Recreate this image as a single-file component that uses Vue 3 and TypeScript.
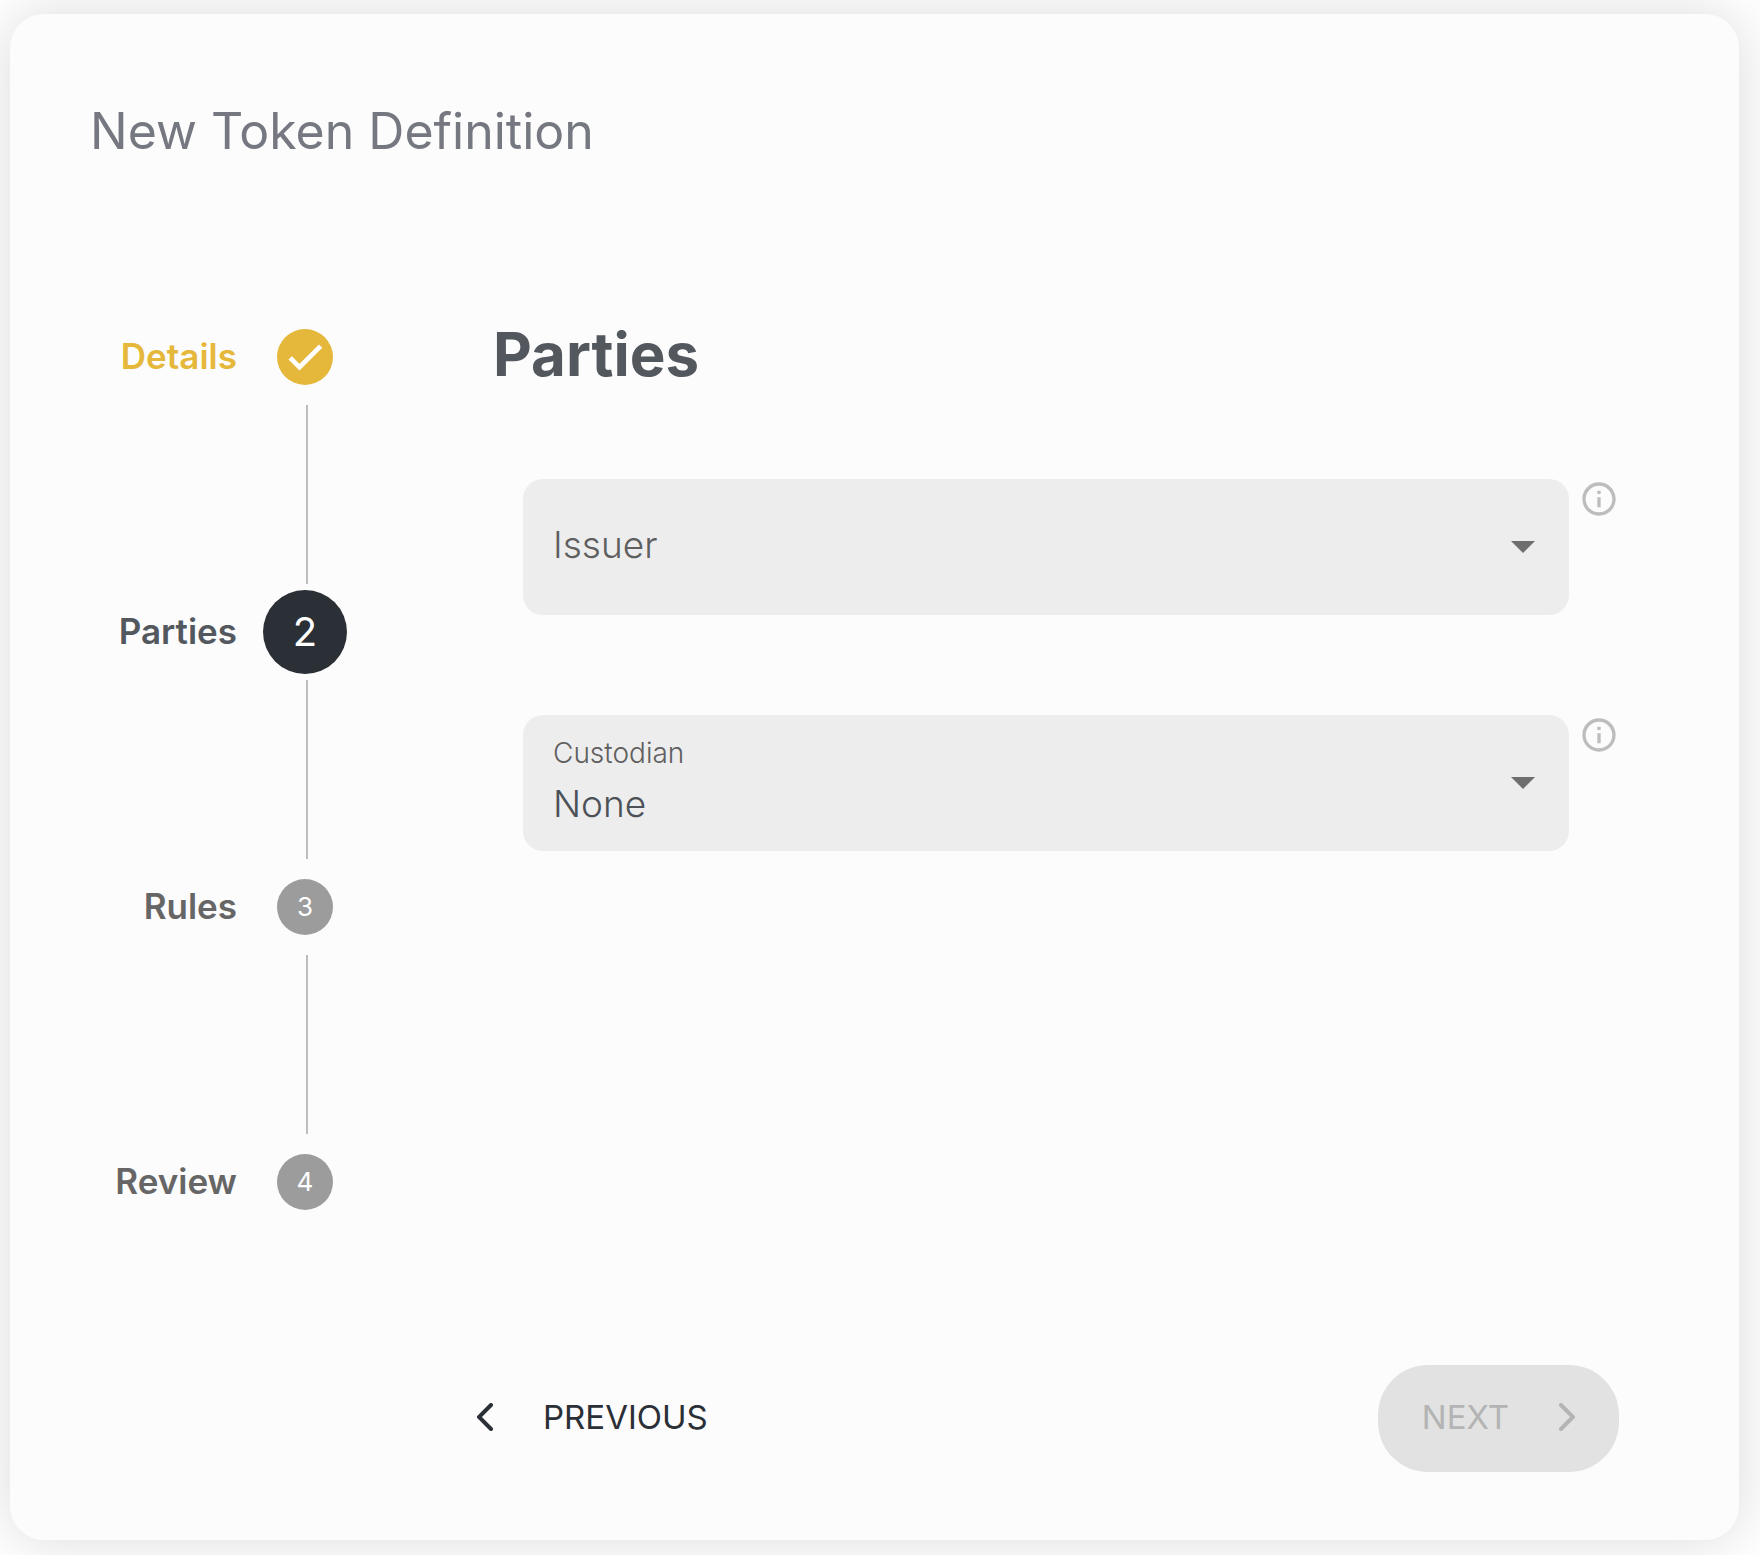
<script setup lang="ts">
import { ref } from 'vue'

type StepState = 'done' | 'active' | 'todo'

interface Step {
  label: string
  state: StepState
}

const steps: Step[] = [
  { label: 'Details', state: 'done' },
  { label: 'Parties', state: 'active' },
  { label: 'Rules', state: 'todo' },
  { label: 'Review', state: 'todo' },
]

const issuer = ref('')
const custodian = ref('none')
</script>

<template>
  <main class="page">
    <section class="card">
      <h1 class="title">New Token Definition</h1>

      <div class="body">
        <ol class="steps">
          <li v-for="(step, i) in steps" :key="step.label" class="step" :class="step.state">
            <div class="step-row">
              <span class="step-label">{{ step.label }}</span>
              <span class="marker-slot">
                <span class="marker">
                  <svg v-if="step.state === 'done'" class="check" viewBox="0 0 24 24" aria-hidden="true">
                    <path d="M9 16.17 4.83 12l-1.42 1.41L9 19 21 7l-1.41-1.41z" />
                  </svg>
                  <template v-else>{{ i + 1 }}</template>
                </span>
              </span>
            </div>
            <div v-if="i < steps.length - 1" class="connector"></div>
          </li>
        </ol>

        <form class="panel" @submit.prevent>
          <h2 class="heading">Parties</h2>

          <div class="field-row">
            <div class="field">
              <label for="issuer" class="field-label" :class="{ floating: issuer }">Issuer</label>
              <select id="issuer" v-model="issuer" class="select">
                <option value=""></option>
              </select>
              <svg class="caret" viewBox="0 0 24 12" aria-hidden="true"><path d="M0 0h24L12 12z" /></svg>
            </div>
            <button type="button" class="info" aria-label="About the issuer">
              <svg viewBox="0 0 24 24" aria-hidden="true">
                <path d="M11 7h2v2h-2zm0 4h2v6h-2zm1-9C6.48 2 2 6.48 2 12s4.48 10 10 10 10-4.48 10-10S17.52 2 12 2m0 18c-4.41 0-8-3.59-8-8s3.59-8 8-8 8 3.59 8 8-3.59 8-8 8" />
              </svg>
            </button>
          </div>

          <div class="field-row">
            <div class="field">
              <label for="custodian" class="field-label" :class="{ floating: custodian }">Custodian</label>
              <select id="custodian" v-model="custodian" class="select">
                <option value="none">None</option>
              </select>
              <svg class="caret" viewBox="0 0 24 12" aria-hidden="true"><path d="M0 0h24L12 12z" /></svg>
            </div>
            <button type="button" class="info" aria-label="About the custodian">
              <svg viewBox="0 0 24 24" aria-hidden="true">
                <path d="M11 7h2v2h-2zm0 4h2v6h-2zm1-9C6.48 2 2 6.48 2 12s4.48 10 10 10 10-4.48 10-10S17.52 2 12 2m0 18c-4.41 0-8-3.59-8-8s3.59-8 8-8 8 3.59 8 8-3.59 8-8 8" />
              </svg>
            </button>
          </div>
        </form>
      </div>

      <footer class="actions">
        <button type="button" class="action">
          <svg class="chevron" viewBox="0 0 16 28" aria-hidden="true"><path d="M14 2 2 14l12 12" /></svg>
          Previous
        </button>
        <button type="button" class="action next" disabled>
          Next
          <svg class="chevron" viewBox="0 0 16 28" aria-hidden="true"><path d="m2 2 12 12L2 26" /></svg>
        </button>
      </footer>
    </section>
  </main>
</template>

<style>
body {
  margin: 0;
  background: #fff;
}
</style>

<style scoped>
.page {
  box-sizing: border-box;
  min-height: 100vh;
  padding: 14px 21px 15px 10px;
  overflow: hidden;
  display: flex;
  font-family: Inter, "Liberation Sans", sans-serif;
}

.card {
  box-sizing: border-box;
  flex: 1;
  min-width: 0;
  display: flex;
  flex-direction: column;
  padding: 86px 120px 68px 80px;
  border-radius: 34px;
  background: #fcfcfc;
  box-shadow: 0 0 60px rgba(0, 0, 0, 0.15);
}

.title {
  margin: 0;
  font-size: 50px;
  line-height: 62px;
  font-weight: 400;
  color: #757880;
}

.body {
  flex: 1;
  display: flex;
  gap: 146px;
  padding-top: 147px;
}

.steps {
  list-style: none;
  margin: 0;
  padding: 0;
  width: 257px;
  flex-shrink: 0;
}

.step-row {
  display: flex;
  align-items: center;
  justify-content: flex-end;
  gap: 26px;
  height: 96px;
}

.step-label {
  padding-bottom: 1px;
  font-size: 35px;
  line-height: 43px;
  font-weight: 600;
  color: #666;
}

.marker-slot {
  display: flex;
  justify-content: center;
  width: 84px;
}

.marker {
  display: flex;
  align-items: center;
  justify-content: center;
  width: 56px;
  height: 56px;
  border-radius: 50%;
  background: #9c9c9c;
  color: #fff;
  font-size: 26px;
  line-height: 32px;
  font-weight: 400;
}

.connector {
  width: 2px;
  height: 179px;
  margin-left: 216px;
  background: #bdbdbd;
}

.done .step-label {
  color: #e5b83b;
}

.done .marker {
  background: #e5b83b;
}

.active .step-label {
  color: #53585f;
}

.active .marker {
  width: 84px;
  height: 84px;
  background: #2b2f36;
  font-size: 40px;
  line-height: 48px;
}

.check {
  width: 44px;
  height: 44px;
  fill: #fff;
  stroke: #fff;
  stroke-width: 0.6;
}

.panel {
  flex: 1;
  min-width: 0;
  display: flex;
  flex-direction: column;
}

.heading {
  margin: 9px 0 25px;
  font-size: 60px;
  line-height: 72px;
  font-weight: 700;
  color: #53585f;
}

.field-row {
  display: flex;
  align-items: flex-start;
  gap: 10px;
  margin: 64px 0 0 30px;
}

.field-row + .field-row {
  margin-top: 100px;
}

.field {
  flex: 1;
  min-width: 0;
  display: grid;
  grid-template: 136px / 1fr;
  align-items: center;
  border-radius: 20px;
  background: #ededed;
}

.field > * {
  grid-area: 1 / 1;
}

.field-label {
  z-index: 1;
  padding: 0 0 4px 30px;
  font-size: 37px;
  line-height: 44px;
  font-weight: 300;
  color: #5f5f5f;
  pointer-events: none;
}

.field-label.floating {
  align-self: start;
  padding-top: 21px;
  font-size: 28px;
  line-height: 34px;
}

.select {
  box-sizing: border-box;
  appearance: none;
  width: 100%;
  height: 100%;
  margin: 0;
  padding: 42px 80px 0 30px;
  border: 0;
  border-radius: 20px;
  background: transparent;
  font-family: inherit;
  font-size: 37px;
  line-height: 44px;
  font-weight: 300;
  color: #4c5158;
}

.caret {
  z-index: 1;
  justify-self: end;
  width: 24px;
  height: 12px;
  margin-right: 34px;
  fill: #6e6e6e;
  pointer-events: none;
}

.info {
  display: flex;
  margin: 0;
  padding: 0;
  border: 0;
  background: none;
}

.info svg {
  width: 40px;
  height: 40px;
  fill: #bdbdbd;
}

.actions {
  display: flex;
  justify-content: space-between;
  padding-left: 343px;
}

.action {
  display: flex;
  align-items: center;
  gap: 50px;
  height: 107px;
  padding: 0 44px 3px;
  border: 0;
  border-radius: 50px;
  background: none;
  font-family: inherit;
  font-size: 33px;
  line-height: 40px;
  font-weight: 400;
  text-transform: uppercase;
  color: #2b2f36;
}

.next {
  background: #e2e2e2;
  color: #b4b4b4;
}

.chevron {
  width: 16px;
  height: 28px;
  fill: none;
  stroke: currentColor;
  stroke-width: 4;
  stroke-linecap: round;
}
</style>
